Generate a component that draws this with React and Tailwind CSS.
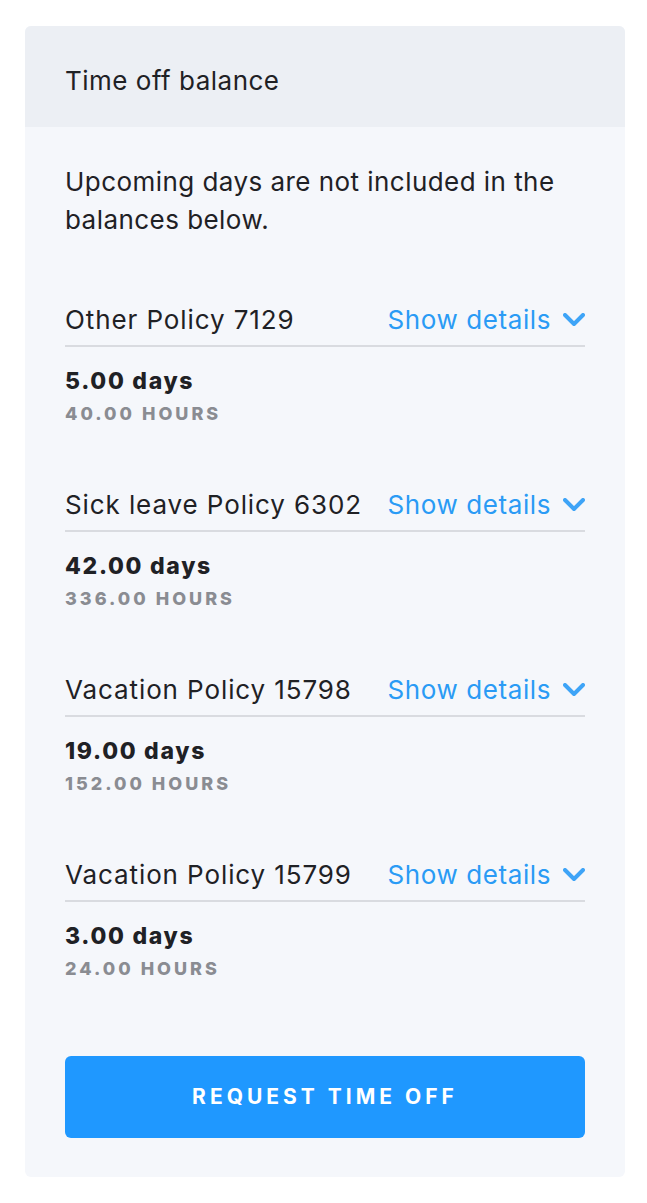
import React from "react";

const policies = [
  { name: "Other Policy 7129", days: "5.00", hours: "40.00" },
  { name: "Sick leave Policy 6302", days: "42.00", hours: "336.00" },
  { name: "Vacation Policy 15798", days: "19.00", hours: "152.00" },
  { name: "Vacation Policy 15799", days: "3.00", hours: "24.00" },
];

const Chevron = () => (
  <svg width="22" height="14" viewBox="0 0 22 14" fill="none" className="ml-3">
    <polyline points="2,2 11,11 20,2" stroke="#3ea4f7" strokeWidth="4" strokeLinecap="round" strokeLinejoin="round" />
  </svg>
);

const TimeOffBalance = () => {
  return (
    <div className="min-h-screen bg-white pt-[26px] px-[25px] font-['Inter',sans-serif]">
      <div className="w-[600px] rounded-md overflow-hidden bg-[#f5f7fb]">
        {/* header */}
        <div className="h-[101px] bg-[#eceff4] px-10 flex items-center">
          <h2 className="text-[26px] tracking-[0.5px] text-[#1f2125] pt-[8px]">Time off balance</h2>
        </div>

        {/* body */}
        <div className="px-10 pt-9 pb-[39px]">
          <p className="text-[26px] leading-[38px] tracking-[0.45px] text-[#1f2125]">Upcoming days are not included in the balances below.</p>

          {policies.map((p) => (
            <div key={p.name} className="mt-[65px]">
              <div className="flex items-center justify-between border-b-2 border-[#d9dbe0] pb-[9px]">
                <span className="text-[26px] leading-[32px] tracking-[0.9px] text-[#1f2125]">{p.name}</span>
                <button className="flex items-center text-[26px] leading-[32px] tracking-[0.6px] text-[#2a9bf5]">
                  Show details
                  <Chevron />
                </button>
              </div>
              <div className="mt-[19px] text-[23px] leading-[30px] font-extrabold tracking-[1.7px] text-[#1f2125]">{p.days} days</div>
              <div className="mt-[8px] text-[18px] leading-[20px] font-extrabold tracking-[3px] text-[#8a8c92]">{p.hours} HOURS</div>
            </div>
          ))}

          <button className="mt-[77px] w-full h-[82px] rounded-md bg-[#1f98ff] text-white text-[21px] font-bold tracking-[4px]">REQUEST TIME OFF</button>
        </div>
      </div>
    </div>
  );
};

export default TimeOffBalance;
